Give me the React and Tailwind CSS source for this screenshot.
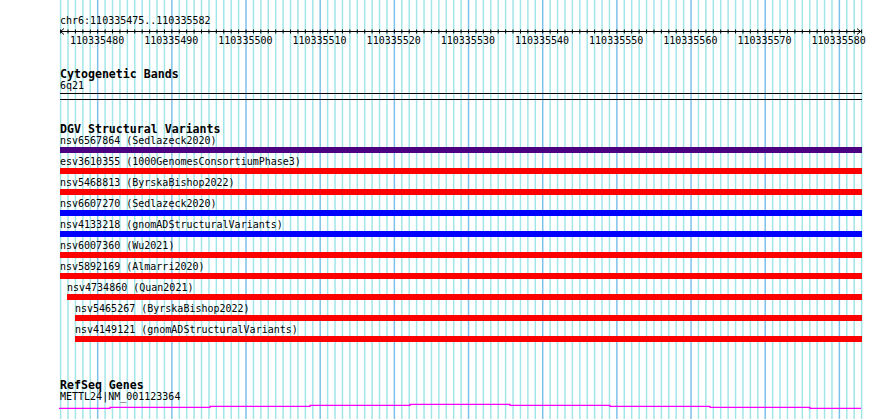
import React from 'react';

const BP = 7.417;
const START = 110335475;
const BASES = 108;
const ORIGIN = 60.6;

const variants = [
  { id: 'nsv6567864', study: 'Sedlazeck2020', color: 'bg-[#4b0082]', indent: '' },
  { id: 'esv3610355', study: '1000GenomesConsortiumPhase3', color: 'bg-[#ff0000]', indent: '' },
  { id: 'nsv5468813', study: 'ByrskaBishop2022', color: 'bg-[#ff0000]', indent: '' },
  { id: 'nsv6607270', study: 'Sedlazeck2020', color: 'bg-[#0000ff]', indent: '' },
  { id: 'nsv4133218', study: 'gnomADStructuralVariants', color: 'bg-[#0000ff]', indent: '' },
  { id: 'nsv6007360', study: 'Wu2021', color: 'bg-[#ff0000]', indent: '' },
  { id: 'nsv5892169', study: 'Almarri2020', color: 'bg-[#ff0000]', indent: '' },
  { id: 'nsv4734860', study: 'Quan2021', color: 'bg-[#ff0000]', indent: 'ml-[7px]' },
  { id: 'nsv5465267', study: 'ByrskaBishop2022', color: 'bg-[#ff0000]', indent: 'ml-[15px]' },
  { id: 'nsv4149121', study: 'gnomADStructuralVariants', color: 'bg-[#ff0000]', indent: 'ml-[15px]' },
];

const labels = [];
for (let b = 110335480; b <= 110335580; b += 10) labels.push(b);

const GridLines = () => {
  const lines = [];
  for (let i = 0; i <= BASES; i++) {
    const x = ORIGIN + BP * i;
    const major = (START + i) % 10 === 0;
    lines.push(
      <line
        key={i}
        x1={x}
        x2={x}
        y1={0}
        y2={419}
        stroke={major ? '#7dc2ea' : '#a2e6ea'}
        strokeWidth={1.5}
      />
    );
  }
  return (
    <svg className="absolute inset-0 w-[890px] h-[419px]" width="890" height="419">
      {lines}
    </svg>
  );
};

const Ruler = () => {
  const ticks = [];
  for (let i = 0; i <= BASES; i++) {
    const x = ORIGIN - 60 + BP * i;
    ticks.push(<line key={i} x1={x} x2={x} y1={2.5} y2={6.5} stroke="#000" strokeWidth={1} />);
  }
  return (
    <svg className="block w-[802px] h-[9px] overflow-visible" width="802" height="9">
      <line x1={0} x2={801} y1={4.5} y2={4.5} stroke="#000" strokeWidth={1} />
      {ticks}
      <polyline points="4,1.5 0.5,4.5 4,7.5" fill="none" stroke="#000" strokeWidth={1} />
      <polyline points="797,1.5 800.5,4.5 797,7.5" fill="none" stroke="#000" strokeWidth={1} />
    </svg>
  );
};

// gene model drawn as a stepped line (one step per 100px)
const GeneWave = () => {
  const steps = [
    [59, 110, 6],
    [110, 210, 5],
    [210, 310, 4],
    [310, 410, 3],
    [410, 510, 2],
    [510, 610, 3],
    [610, 710, 4],
    [710, 810, 5],
    [810, 861, 6],
  ];
  const pts = [];
  steps.forEach(([a, b, y]) => {
    pts.push(`${a - 60},${y + 0.4}`);
    pts.push(`${b - 60},${y + 0.4}`);
  });
  return (
    <svg className="block w-[802px] h-[8px] overflow-visible" width="802" height="8">
      <polyline points={pts.join(' ')} fill="none" stroke="#ff00ff" strokeWidth={1.3} />
    </svg>
  );
};

const TrackTitle = ({ children, className = '' }) => (
  <div className={`text-[11.6px] leading-[12px] h-[12px] font-bold whitespace-nowrap ${className}`}>
    {children}
  </div>
);

export default function App() {
  return (
    <div className="relative w-[890px] h-[419px] overflow-hidden bg-white text-black font-['DejaVu_Sans_Mono',monospace]">
      <GridLines />
      <div className="relative pl-[60px] pt-[14.5px] w-[862px] flex flex-col">
        <div className="text-[10px] leading-[12px] h-[12px] whitespace-nowrap">chr6:110335475..110335582</div>
        <Ruler />
        <div className="flex h-[10px] text-[10px] leading-[10px]">
          {labels.map((l) => (
            <div key={l} className="w-[74.17px] shrink-0 text-center">{l}</div>
          ))}
        </div>

        <TrackTitle className="mt-[22px]">Cytogenetic Bands</TrackTitle>
        <div className="text-[10px] leading-[12px] h-[12px]">6q21</div>
        <div className="mt-[1.5px] h-[7px] border-y border-black w-[802px]" />

        <TrackTitle className="mt-[23px]">DGV Structural Variants</TrackTitle>
        <div className="flex flex-col w-[802px]">
          {variants.map((v) => (
            <div key={v.id} className={`flex flex-col h-[21px] ${v.indent}`}>
              <div className="text-[10px] leading-[12px] h-[12px] whitespace-nowrap">
                {v.id} ({v.study})
              </div>
              <div className={`h-[6px] ${v.color}`} />
            </div>
          ))}
        </div>

        <TrackTitle className="mt-[34px]">RefSeq Genes</TrackTitle>
        <div className="text-[10px] leading-[11px] h-[11px] whitespace-nowrap pb-[1px]">METTL24|NM_001123364</div>
        <GeneWave />
      </div>
    </div>
  );
}
